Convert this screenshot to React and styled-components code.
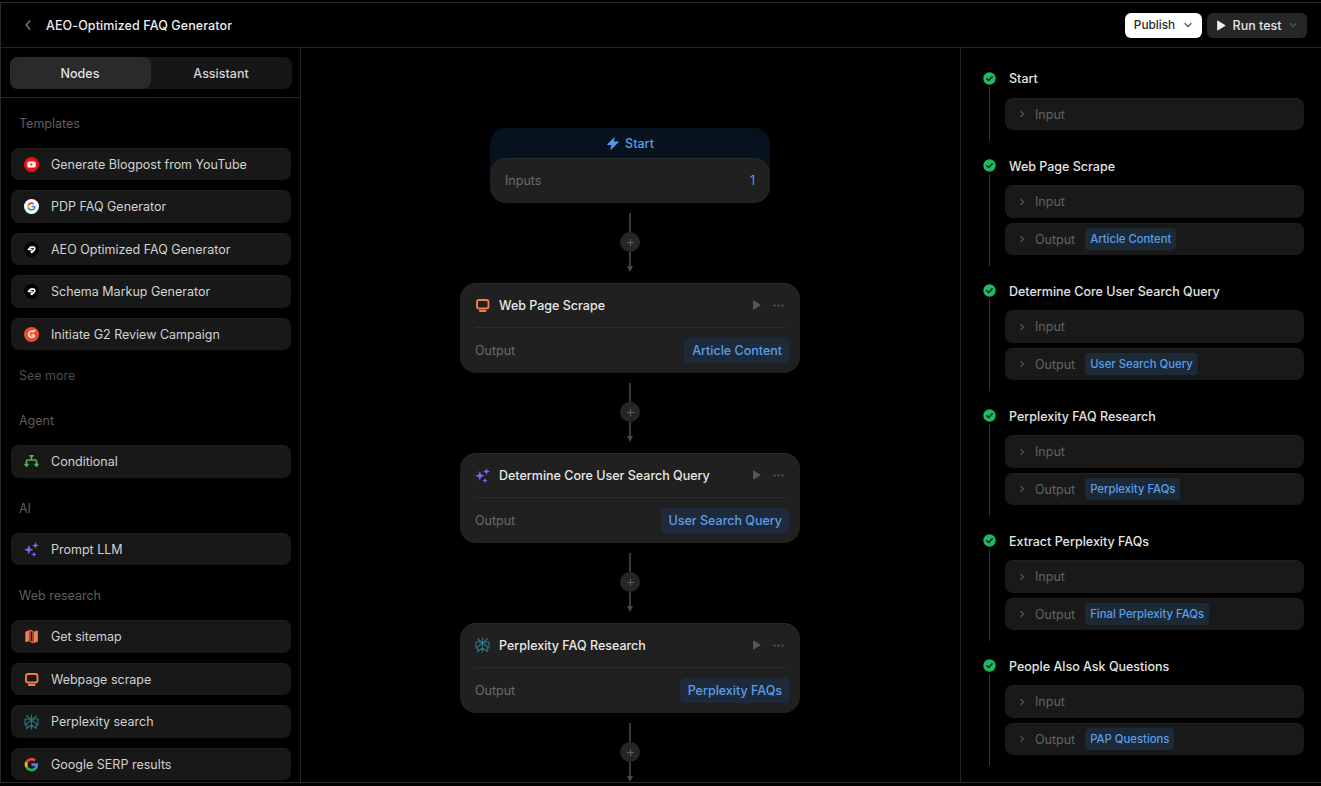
import React from "react";
import styled, { createGlobalStyle } from "styled-components";

const Global = createGlobalStyle`
  html, body { margin: 0; padding: 0; background: #000; height: 100%; overflow: hidden; }
  body { font-family: Inter, "Noto Sans", sans-serif; -webkit-font-smoothing: antialiased; }
  * { box-sizing: border-box; }
`;

const Frame = styled.div`
  margin-top: 2px; height: 781px; width: 1321px; display: flex; flex-direction: column;
  border-top: 1px solid #2a2a2a; border-left: 1px solid #2a2a2a; border-bottom: 1px solid #2a2a2a;
  background: #000; color: #eee; overflow: hidden; font-size: 12.5px;
`;
const Header = styled.header`
  height: 45px; flex: none; display: flex; align-items: center; border-bottom: 1px solid #242424;
  padding: 0 14px 0 21px;
`;
const Back = styled.span` display: flex; width: 24px; color: #777; `;
const Title = styled.h1` margin: 1px 0 0; font-size: 12.5px; font-weight: 450; letter-spacing: 0.1px; color: #ededed; flex: 1; `;
const PublishBtn = styled.button`
  height: 25px; width: 77px; background: #fff; border: 0; border-radius: 6px; color: #2a2a2a;
  font: 450 11.8px Inter, sans-serif; display: flex; align-items: center; justify-content: center; gap: 8px; padding: 0;
`;
const RunBtn = styled.button`
  height: 25px; width: 100px; margin-left: 5px; background: #262626; border: 0; border-radius: 6px; color: #e4e4e4;
  font: 450 12.5px Inter, sans-serif; display: flex; align-items: center; justify-content: center; gap: 7px; padding: 0;
`;
const Body = styled.div` flex: 1; display: flex; min-height: 0; `;

const Sidebar = styled.aside`
  width: 300px; flex: none; border-right: 1px solid #242424; overflow: hidden; display: flex; flex-direction: column;
`;
const TabBar = styled.div` height: 50px; flex: none; padding: 9px 8px 0 9px; border-bottom: 1px solid #242424; `;
const Tabs = styled.div` height: 32px; display: flex; background: #161616; border-radius: 8px; `;
const Tab = styled.div`
  flex: 1; display: flex; align-items: center; justify-content: center; font-size: 12.5px; font-weight: 450; padding-right: 1px;
  color: ${p => (p.$active ? "#e0e0e0" : "#d4d4d4")}; border-radius: 8px; background: ${p => (p.$active ? "#2a2a2a" : "transparent")};
`;
const SideContent = styled.div` padding: 14.9px 9px 0 10px; `;
const SectionLabel = styled.div` height: 20px; line-height: 22px; padding-left: 8px; color: #5e5e5e; font-size: 12.5px; margin-bottom: 15px; `;
const SeeMore = styled(SectionLabel)` margin: 15px 0 25px; color: #4d4d4d; `;
const List = styled.div` display: flex; flex-direction: column; gap: 10px; margin-bottom: ${p => p.$mb}px; `;
const Item = styled.div`
  height: 32.5px; border-radius: 8px; background: #181818; box-shadow: inset 0 1px 0 rgba(255,255,255,.035);
  display: flex; align-items: center; padding-left: 12.5px; gap: 12.5px; color: #d2d2d2; font-size: 12.5px;
`;
const IconBox = styled.span` width: 15px; height: 15px; display: flex; flex: none; align-items: center; justify-content: center; `;

const Canvas = styled.main`
  flex: 1; min-width: 0; overflow: hidden; display: flex; flex-direction: column; align-items: center; padding: 80px 1px 0 0;
`;
const StartCard = styled.div` flex: none; width: 280px; height: 75px; border-radius: 16px; background: #07121f; display: flex; flex-direction: column; `;
const StartHead = styled.div`
  height: 30px; flex: none; display: flex; align-items: center; justify-content: center; gap: 5px; color: #5a9fea; font-size: 12.5px; font-weight: 450;
`;
const StartBody = styled.div`
  flex: 1; border-radius: 16px; background: #202020; box-shadow: inset 0 1px 0 rgba(255,255,255,.05);
  display: flex; align-items: center; justify-content: space-between; padding: 0 15px 0; color: #6b6b6b;
`;
const Blue = styled.span` color: #5a9fea; `;
const Connector = styled.div` position: relative; flex: none; width: 20px; height: 60px; margin: 10px 0; display: flex; flex-direction: column; align-items: center; `;
const Stem = styled.div` width: 1.5px; height: 53px; background: #3a3a3a; `;
const Arrow = styled.div` width: 0; height: 0; border-left: 3.5px solid transparent; border-right: 3.5px solid transparent; border-top: 6.5px solid #484848; `;
const Plus = styled.div`
  position: absolute; top: 19px; left: 0; width: 20px; height: 20px; border-radius: 50%; background: #262626;
  display: flex; align-items: center; justify-content: center; color: #5e5e5e;
`;
const Node = styled.div`
  flex: none; width: 340px; height: 90px; border-radius: 16px; background: #202020; box-shadow: inset 0 1px 0 rgba(255,255,255,.05);
  padding: 0 10px 0 15px; display: flex; flex-direction: column;
`;
const NodeHead = styled.div`
  height: 45px; flex: none; margin-right: 5px; border-bottom: 1px solid #2c2c2c; display: flex; align-items: center; gap: 9px;
  font-size: 12.5px; font-weight: 450; color: #e8e8e8;
`;
const NodeTitle = styled.span` flex: 1; `;
const NodeTools = styled.span` display: flex; align-items: center; gap: 12px; margin-right: 1px; `;
const NodeFoot = styled.div` flex: 1; display: flex; align-items: center; justify-content: space-between; padding-bottom: 1px; color: #6b6b6b; `;
const BigPill = styled.span` height: 25px; padding: 0 8px; border-radius: 5px; background: #1e2a39; color: #5a9fea; font-size: 12.5px; font-weight: 450; display: flex; align-items: center; `;

const Panel = styled.aside`
  width: 361px; flex: none; border-left: 1px solid #242424; padding: 20.4px 17px 0 21px; overflow: hidden;
`;
const Step = styled.section` display: flex; gap: 13px; min-height: ${p => p.$h}px; `;
const Rail = styled.div` width: 14px; flex: none; display: flex; flex-direction: column; align-items: center; padding: 3.5px 0 0; `;
const RailLine = styled.div` width: 1px; flex: 1; background: #333; margin: 2px 0 15px; `;
const StepBody = styled.div` flex: 1; min-width: 0; display: flex; flex-direction: column; `;
const StepTitle = styled.div` height: 20px; line-height: 21px; font-weight: 450; font-size: 12.5px; color: #e4e4e4; margin-bottom: 9.6px; `;
const RowList = styled.div` display: flex; flex-direction: column; gap: 5px; margin-left: -4.5px; `;
const Row = styled.div`
  height: 32.5px; border-radius: 8px; background: #191919; box-shadow: inset 0 1px 0 rgba(255,255,255,.03);
  display: flex; align-items: center; padding-left: 12.5px; color: #636363; font-size: 12.5px;
`;
const RowChevron = styled.span` width: 18px; display: flex; color: #555; `;
const SmallPill = styled.span` margin-left: 10px; height: 22px; padding: 0 5px; border-radius: 4px; background: #1c2937; color: #5a9fea; font-size: 11.3px; font-weight: 450; display: flex; align-items: center; `;

const Chevron = ({ dir = "down", color = "currentColor", s = 10 }) => (
  <svg width={s} height={s} viewBox="0 0 10 10" fill="none" stroke={color} strokeWidth="1.2" strokeLinecap="round" strokeLinejoin="round">
    {dir === "down" && <path d="M2 3.5 5 6.5 8 3.5" />}
    {dir === "left" && <path d="M6.5 1.5 3.5 5 6.5 8.5" />}
    {dir === "right" && <path d="M4 2.5 6.5 5 4 7.5" />}
  </svg>
);
const GPaths = () => (
  <>
    <path fill="#4285F4" d="M22.5 12.2c0-.8-.1-1.5-.2-2.2H12v4.2h5.9a5 5 0 0 1-2.2 3.3v2.7h3.5c2.1-1.9 3.3-4.7 3.3-8z" />
    <path fill="#34A853" d="M12 23c3 0 5.4-1 7.2-2.7l-3.5-2.7c-1 .7-2.2 1.1-3.7 1.1-2.8 0-5.2-1.9-6.1-4.5H2.3v2.8A11 11 0 0 0 12 23z" />
    <path fill="#FBBC05" d="M5.9 14.1a6.6 6.6 0 0 1 0-4.2V7.1H2.3a11 11 0 0 0 0 9.8z" />
    <path fill="#EA4335" d="M12 5.4c1.6 0 3 .5 4.1 1.6l3.1-3.1A11 11 0 0 0 2.3 7.1l3.6 2.8C6.8 7.3 9.2 5.4 12 5.4z" />
  </>
);
const GMark = () => (
  <svg width="15" height="15" viewBox="0 0 24 24"><GPaths /></svg>
);
const YouTube = () => (
  <svg width="15" height="15" viewBox="0 0 15 15">
    <circle cx="7.5" cy="7.5" r="7.5" fill="#f40f0f" />
    <rect x="3.3" y="4.5" width="8.4" height="6" rx="1.5" fill="#fff" />
    <path d="M6.5 6 9 7.5 6.5 9z" fill="#f40f0f" />
  </svg>
);
const GoogleRound = () => (
  <svg width="15" height="15" viewBox="0 0 15 15">
    <circle cx="7.5" cy="7.5" r="7.5" fill="#fff" />
    <g transform="translate(2.8 2.8) scale(.39)"><GPaths /></g>
  </svg>
);
const Swirl = () => (
  <svg width="15" height="15" viewBox="0 0 15 15">
    <circle cx="7.5" cy="7.5" r="7.5" fill="#000" />
    <path d="M4 8 6.5 5.2H9.3C10.7 5.2 11.3 6.8 10.3 7.8L7.8 10.3 6.7 9.2" fill="none" stroke="#fff" strokeWidth="1.7" strokeLinejoin="round" />
    <path d="M5.5 8.3 6.3 7.5H8.6" fill="none" stroke="#fff" strokeWidth="1.3" />
  </svg>
);
const G2 = () => (
  <svg width="15" height="15" viewBox="0 0 15 15">
    <circle cx="7.5" cy="7.5" r="7.5" fill="#f4492c" />
    <path d="M9.6 4.8A3.1 3.1 0 1 0 10.4 9" fill="none" stroke="#fff" strokeWidth="1.5" strokeLinecap="round" />
    <path d="M7.5 8h3" stroke="#fff" strokeWidth="1.3" />
    <path d="M9.3 3.3h2.3" stroke="#fff" strokeWidth="1.1" />
  </svg>
);
const Branch = () => (
  <svg width="15" height="15" viewBox="0 0 15 15" fill="none" stroke="#46b35a" strokeWidth="1.7" strokeLinecap="round" strokeLinejoin="round">
    <path d="M7.5 2V6M6 1.8h3M2.5 10.5V7.3c0-.7.5-1.3 1.2-1.3h7.6c.7 0 1.2.6 1.2 1.3v3.2" />
    <path d="M1 10.3l1.5 1.8 1.500-1.800M11 10.300l1.500 1.800 1.500-1.800" />
  </svg>
);
const Sparkles = () => (
  <svg width="15" height="15" viewBox="0 0 15 15" fill="#8a5cf6">
    <path d="M4.8 3 6.1 6.4 9.5 7.7 6.1 9 4.8 12.4 3.5 9 .1 7.7 3.5 6.4z" />
    <path d="M11.5 0 12.4 2.6 15 3.5 12.4 4.4 11.5 7 10.6 4.4 8 3.5 10.6 2.6z" />
    <path d="M10 9.800 10.800 11.700 12.700 12.500 10.800 13.300 10 15.200 9.200 13.300 7.300 12.500 9.200 11.700z" />
  </svg>
);
const MapIcon = () => (
  <svg width="15" height="15" viewBox="0 0 15 15" fill="#f47c55">
    <path d="M1.3 3.3c0-.4.2-.7.6-.9L5 1.2v10.900l-2.400 1c-.6.300-1.300-.2-1.300-.8z" />
    <path d="M6 1.3 9 2.6v11L6 12.200z" fill="none" stroke="#f47c55" strokeWidth="1.1" />
    <path d="M10 2.8l2.900-1.200c.5-.2 1 .2 1 .7v9.600c0 .4-.2.700-.6.900L10 14z" />
  </svg>
);
const Monitor = () => (
  <svg width="15" height="15" viewBox="0 0 15 15" fill="none">
    <rect x="2" y="2" width="11.5" height="8.5" rx="2" stroke="#f47c55" strokeWidth="1.9" />
    <path d="M5 13h5.5" stroke="#f47c55" strokeWidth="2.1" strokeLinecap="round" />
  </svg>
);
const Perplexity = () => (
  <svg width="15" height="16" viewBox="0 0 15 16" fill="none" stroke="#2f7582" strokeWidth="1.1">
    <path d="M7.5.5v15M2.5 1.500l5 5 5-5M1 5h13v6h-1.800M1 5v6h1.800M2.800 14.500V9.500l4.700-3.500 4.700 3.500v5L7.500 11z" />
  </svg>
);
const Bolt = () => (
  <svg width="14" height="15" viewBox="0 0 14 15" fill="#4f9cf0"><path d="M8.6.8 1.2 8.4c-.2.3 0 .6.3.6h3.900L4.300 14.400 12.500 6.200c.2-.3 0-.6-.3-.6H8z" /></svg>
);
const PlayIcon = ({ c = "#555", w = 9, h = 10 }) => (
  <svg width={w} height={h} viewBox="0 0 9 10"><path d="M1 1.100c0-.5.500-.8.900-.5l6.300 3.900c.4.200.4.800 0 1L1.900 9.400c-.4.300-.9 0-.9-.5z" fill={c} /></svg>
);
const Dots = () => (
  <svg width="11" height="3" viewBox="0 0 11 3" fill="#5c5c5c"><circle cx="1.5" cy="1.5" r="1.1" /><circle cx="5.5" cy="1.5" r="1.1" /><circle cx="9.5" cy="1.5" r="1.1" /></svg>
);
const Check = () => (
  <svg width="13" height="13" viewBox="0 0 13 13" style={{ flex: "none" }}>
    <circle cx="6.5" cy="6.5" r="6.2" fill="#1fb864" />
    <path d="M3.8 6.7 5.7 8.5 9.2 4.8" fill="none" stroke="#06240f" strokeWidth="1.5" strokeLinecap="round" strokeLinejoin="round" />
  </svg>
);

const sections = [
  { label: "Templates", more: true, items: [
    [<YouTube />, "Generate Blogpost from YouTube"], [<GoogleRound />, "PDP FAQ Generator"], [<Swirl />, "AEO Optimized FAQ Generator"],
    [<Swirl />, "Schema Markup Generator"], [<G2 />, "Initiate G2 Review Campaign"] ] },
  { label: "Agent", items: [[<Branch />, "Conditional"]] },
  { label: "AI", items: [[<Sparkles />, "Prompt LLM"]] },
  { label: "Web research", items: [[<MapIcon />, "Get sitemap"], [<Monitor />, "Webpage scrape"], [<Perplexity />, "Perplexity search"], [<GMark />, "Google SERP results"]] },
];
const nodes = [
  [<Monitor />, "Web Page Scrape", "Article Content"],
  [<Sparkles />, "Determine Core User Search Query", "User Search Query"],
  [<Perplexity />, "Perplexity FAQ Research", "Perplexity FAQs"],
];
const steps = [
  ["Start", null], ["Web Page Scrape", "Article Content"], ["Determine Core User Search Query", "User Search Query"],
  ["Perplexity FAQ Research", "Perplexity FAQs"], ["Extract Perplexity FAQs", "Final Perplexity FAQs"], ["People Also Ask Questions", "PAP Questions"],
];

const Link = () => (
  <Connector>
    <Stem />
    <Arrow />
    <Plus>
      <svg width="9" height="9" viewBox="0 0 9 9" stroke="currentColor" strokeWidth="1"><path d="M4.5 1v7M1 4.5h7" /></svg>
    </Plus>
  </Connector>
);

export default function App() {
  return (
    <Frame>
      <Global />
      <Header>
        <Back><Chevron dir="left" s={12} /></Back>
        <Title>AEO-Optimized FAQ Generator</Title>
        <PublishBtn>Publish <Chevron color="#555" /></PublishBtn>
        <RunBtn><PlayIcon c="#f0f0f0" w={10} h={11} /> Run test <Chevron color="#555" /></RunBtn>
      </Header>
      <Body>
        <Sidebar>
          <TabBar>
            <Tabs><Tab $active>Nodes</Tab><Tab>Assistant</Tab></Tabs>
          </TabBar>
          <SideContent>
            {sections.map(s => (
              <div key={s.label}>
                <SectionLabel>{s.label}</SectionLabel>
                <List $mb={s.more ? 0 : 20}>
                  {s.items.map(([icon, text]) => (
                    <Item key={text}><IconBox>{icon}</IconBox>{text}</Item>
                  ))}
                </List>
                {s.more && <SeeMore>See more</SeeMore>}
              </div>
            ))}
          </SideContent>
        </Sidebar>
        <Canvas>
          <StartCard>
            <StartHead><Bolt /> Start</StartHead>
            <StartBody>Inputs <Blue>1</Blue></StartBody>
          </StartCard>
          {nodes.map(([icon, title, out]) => (
            <React.Fragment key={title}>
              <Link />
              <Node>
                <NodeHead>
                  <IconBox>{icon}</IconBox>
                  <NodeTitle>{title}</NodeTitle>
                  <NodeTools><PlayIcon /><Dots /></NodeTools>
                </NodeHead>
                <NodeFoot>Output <BigPill>{out}</BigPill></NodeFoot>
              </Node>
            </React.Fragment>
          ))}
          <Link />
        </Canvas>
        <Panel>
          {steps.map(([title, out]) => (
            <Step key={title} $h={out ? 125 : 87.5}>
              <Rail><Check /><RailLine /></Rail>
              <StepBody>
                <StepTitle>{title}</StepTitle>
                <RowList>
                  <Row><RowChevron><Chevron dir="right" /></RowChevron>Input</Row>
                  {out && <Row><RowChevron><Chevron dir="right" /></RowChevron>Output<SmallPill>{out}</SmallPill></Row>}
                </RowList>
              </StepBody>
            </Step>
          ))}
        </Panel>
      </Body>
    </Frame>
  );
}
